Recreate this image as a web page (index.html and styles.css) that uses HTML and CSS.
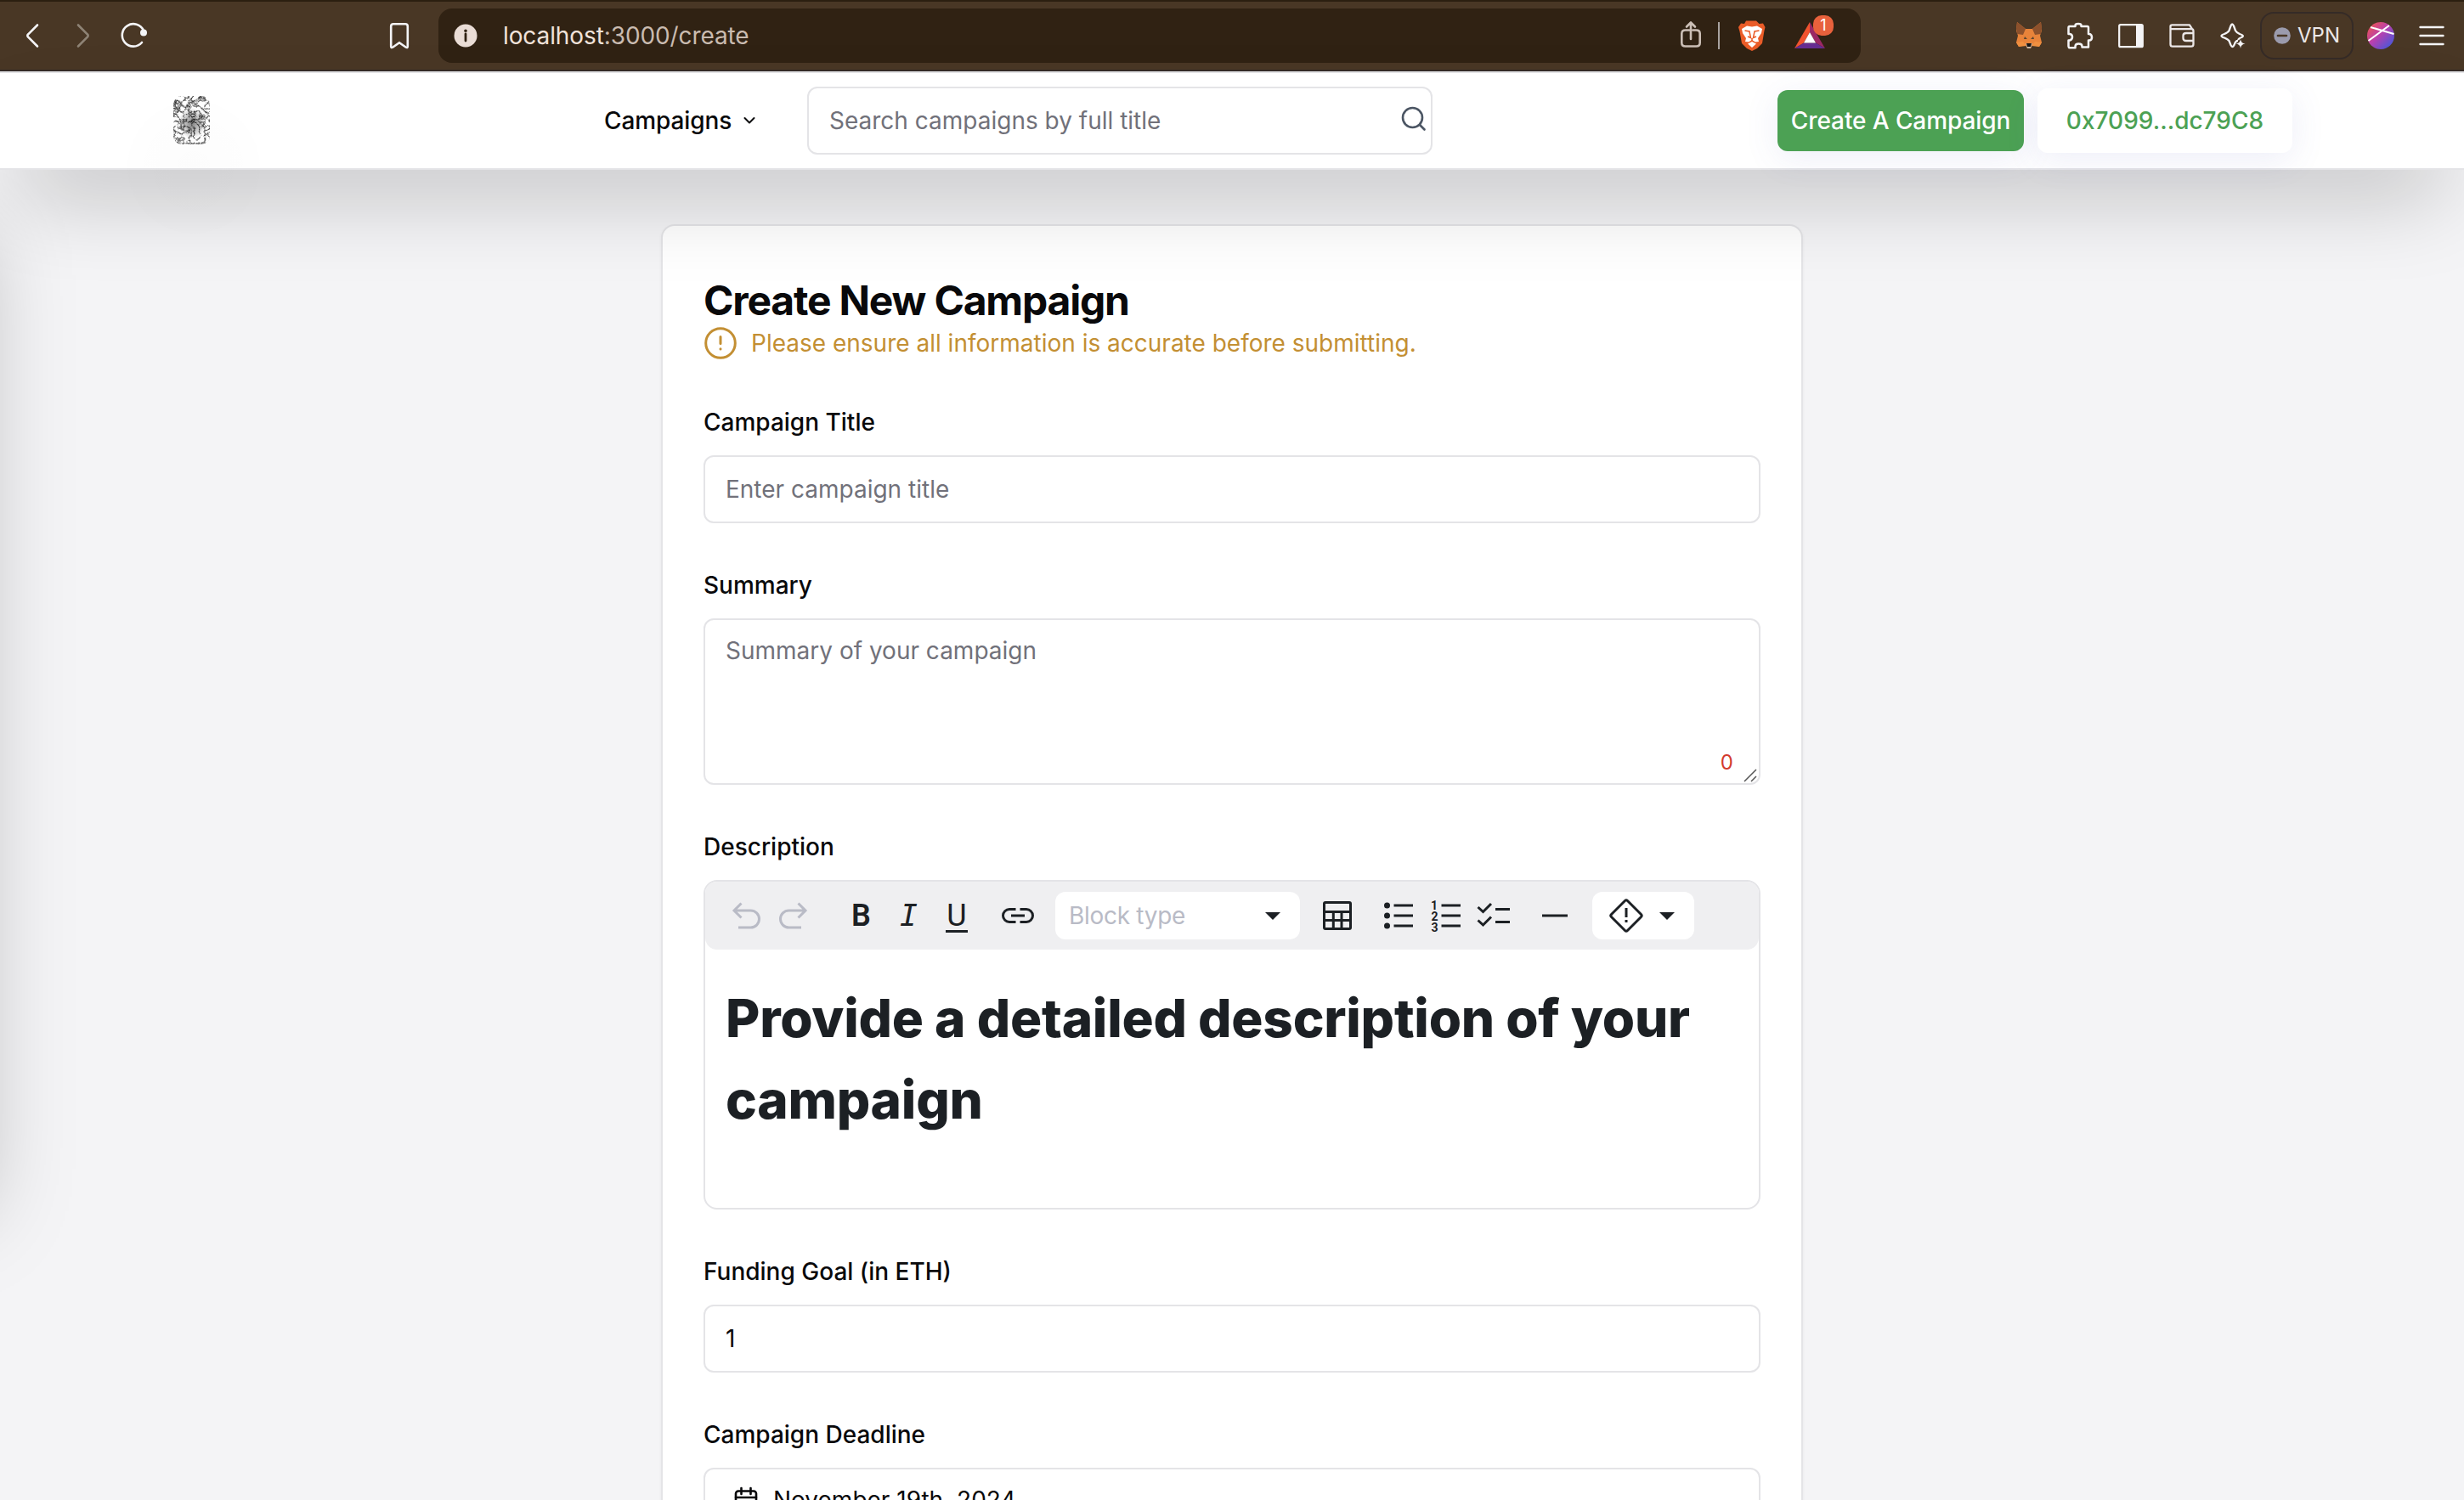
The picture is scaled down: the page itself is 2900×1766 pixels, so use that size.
FILE: index.html
```html
<!DOCTYPE html>
<html lang="en">
<head>
<meta charset="utf-8">
<title>Create New Campaign</title>
<link rel="stylesheet" href="styles.css">
</head>
<body>
<div class="browser">
  <div class="nav-icons">
    <svg width="200" height="80" viewBox="0 0 200 80" fill="none" stroke="#f4f4f6" stroke-width="2.6" stroke-linecap="round" stroke-linejoin="round">
      <path d="M44 27.500L33.200 38.300Q31.400 40 33.200 41.700L44 52.500"/>
      <path d="M92 27.500L102.800 38.300Q104.600 40 102.800 41.700L92 52.500" stroke="#8e8375"/>
      <path d="M167 48A13.200 13.200 0 1 1 169 34"/>
      <circle cx="169" cy="36.500" r="4" fill="#f4f4f6" stroke="none"/>
    </svg>
    <svg class="bookmark" width="24" height="80" viewBox="0 0 24 80" fill="none" stroke="#f4f4f6" stroke-width="2.6" stroke-linejoin="round">
      <path d="M2.200 29Q2.200 26.300 5 26.300H19Q21.800 26.300 21.800 29V52.500Q21.800 55 19.500 53.500L12 48.200L4.500 53.500Q2.200 55 2.200 52.500Z"/>
    </svg>
  </div>
  <div class="url">
    <svg width="28" height="28" viewBox="0 0 28 28"><circle cx="14" cy="14" r="13.500" fill="#eaddd6"/><circle cx="14" cy="8.300" r="1.800" fill="#302213"/><path d="M14 12V20" stroke="#302213" stroke-width="2.800" stroke-linecap="round"/></svg>
    <span class="address">localhost<span class="path">:3000/create</span></span>
    <svg class="url-tools" width="190" height="64" viewBox="0 0 190 64" fill="none">
      <g stroke="#cbbfb6" stroke-width="2.6" stroke-linecap="round" stroke-linejoin="round">
        <path d="M12 25.500H7.500Q3.300 25.500 3.300 29.500V40.500Q3.300 44.500 7.500 44.500H20.500Q24.700 44.500 24.700 40.500V29.500Q24.700 25.500 20.500 25.500H16.500M14 36V17M9 21.500L14 16.500L19 21.500"/>
      </g>
      <path d="M47 16V48" stroke="#a8a3a0" stroke-width="2"/>
      <path d="M79 14.500H91L94.500 18L99 17.500L101.500 22L100.500 26L98 41L92 47L86 50L80 47L74 41L71.500 27L70 22L73 17.500L77 18Z" fill="#ea5c28"/>
      <path d="M80 20.500L86 21.500L92 20.500L98 24L97 29L93 35L94 39L90 39.500L86 37L82 39.500L78 39L79 35L75 29L74 24ZM86 39L91 41.500L86 46L81 41.500Z" fill="#fff"/>
      <path d="M77.500 26L83 27L84.500 34.500L81 33M94.500 26L89 27L87.500 34.500L91 33M86 35V38" stroke="#ea5c28" stroke-width="1.500"/>
      <path d="M154 16L136 47L147 40.500L154 28Z" fill="#f0532e"/>
      <path d="M154 16L172 47L161 40.500L154 28Z" fill="#9b2865"/>
      <path d="M136 47H172L161 40.500H147Z" fill="#662d91"/>
      <path d="M154 28L161 40.500H147Z" fill="#fff"/>
    </svg>
    <span class="badge">1</span>
  </div>
  <div class="extensions">
    <svg width="32" height="32" viewBox="0 0 32 32"><path d="M2 0L12 8H20L30 0L31 10L29 16L31 24L28 29L20 27L18 31H14L12 27L4 29L1 24L3 16L1 10Z" fill="#e8833a"/><path d="M2 0L12 8L9 15L2 14L1 8ZM30 0L20 8L23 15L30 14L31 8Z" fill="#8d512c"/><path d="M1 24L9 23L13 28L4 29ZM31 24L23 23L19 28L28 29Z" fill="#f09040"/><path d="M11 17L14 20L10 20ZM21 17L18 20L22 20Z" fill="#5b4430"/><path d="M12 25L14 31H18L20 25Z" fill="#c9b8a6"/><path d="M13 25H19L18 29H14Z" fill="#151515"/></svg>
    <svg width="32" height="32" viewBox="0 0 32 32" fill="none" stroke="#f4f4f6" stroke-width="2.500" stroke-linejoin="round"><path d="M2.500 6.500Q2.500 5 4 5H10.500V4Q10.500 2 14 2T17.500 4V5H24.500Q26 5 26 6.500V14H27Q30 14.500 30 18T27 21.500H26V29.500H18.500V28.500Q18.500 25.500 14.500 25.500T10.500 28.500V30.300H4Q2.500 30 2.500 28.500V21.500H4Q7 20.500 7 17.500T4 14H2.500Z"/></svg>
    <svg width="32" height="32" viewBox="0 0 32 32" fill="none" stroke="#f4f4f6" stroke-width="2.200"><rect x="2.200" y="3.200" width="27.600" height="26" rx="1.500"/><path d="M22 3H30V29H22Z" fill="#f4f4f6" stroke="none"/></svg>
    <svg width="32" height="32" viewBox="0 0 32 32" fill="none" stroke="#ece8e8" stroke-width="2.300" stroke-linejoin="round"><path d="M4.500 3.300H25L28 8.200H2.500V5Q2.500 3.300 4.500 3.300ZM2.500 8.200V26Q2.500 28.700 5 28.700H27Q29.500 28.700 29.500 26V10.500Q29.500 8.200 27 8.200M29.500 13H21Q17.500 13 17.500 16V19Q17.500 22 21 22H29.500Z"/></svg>
    <svg width="32" height="32" viewBox="0 0 32 32" fill="none" stroke="#f4f4f6" stroke-width="2.300" stroke-linejoin="round"><path d="M22 22Q19 22 17.500 27Q15.500 31 13.500 27L11.500 22Q10.500 20.500 6 18.500Q-1 16 6 14Q10.500 12 11.500 10L13.500 4.500Q15 0.500 17 4.500L19 10Q20 12 24 14Q30.500 16 26 18Q23 19 22 21"/><path d="M25 20Q25.500 25 30.500 25.500Q25.500 26 25 31Q24.500 26 19.500 25.500Q24.500 25 25 20Z" fill="#f4f4f6" stroke="none"/></svg>
  </div>
  <div class="vpn"><svg width="20" height="20" viewBox="0 0 20 20"><circle cx="10" cy="10" r="9.800" fill="#9b9bad"/><path d="M5 10H15" stroke="#493725" stroke-width="2.600" stroke-linecap="round"/></svg><span>VPN</span></div>
  <svg class="profile" width="32" height="32" viewBox="0 0 32 32"><defs><linearGradient id="pg" x1="0" y1="0.100" x2="0.900" y2="1"><stop offset="0" stop-color="#f0554a"/><stop offset=".45" stop-color="#b93fae"/><stop offset="1" stop-color="#3a5be0"/></linearGradient></defs><circle cx="16" cy="16" r="16" fill="url(#pg)"/><path d="M4 6L31.500 14M26 4L1.500 22" stroke="#fff" stroke-width="2"/></svg>
  <svg class="menu" width="30" height="24" viewBox="0 0 30 24" stroke="#f4f4f6" stroke-width="2.400" stroke-linecap="round"><path d="M1.500 2H28.500M1.500 12H28.500M1.500 22H28.500"/></svg>
</div>

<nav class="navbar">
  <div class="logo">
    <svg width="44" height="58" viewBox="0 0 44 58">
      <defs>
        <filter id="etch" x="0" y="0" width="1" height="1" color-interpolation-filters="sRGB">
          <feTurbulence type="turbulence" baseFrequency="0.16" numOctaves="3" seed="8"/>
          <feColorMatrix values="2.500 0 0 0 0.120  2.500 0 0 0 0.120  2.500 0 0 0 0.120  0 0 0 0 1"/>
          <feComposite in2="SourceGraphic" operator="in"/>
        </filter>
        <radialGradient id="core"><stop offset="0" stop-color="#000" stop-opacity=".5"/><stop offset="1" stop-color="#000" stop-opacity="0"/></radialGradient>
      </defs>
      <rect width="43" height="57" rx="10" filter="url(#etch)"/>
      <ellipse cx="22" cy="32" rx="16" ry="18" fill="url(#core)"/>
    </svg>
  </div>
  <div class="campaigns"><span>Campaigns</span><svg width="14" height="10" viewBox="0 0 14 10" fill="none" stroke="#09090b" stroke-width="2" stroke-linecap="round" stroke-linejoin="round"><path d="M1.500 2L7 7.500L12.500 2"/></svg></div>
  <div class="search"><span>Search campaigns by full title</span><svg width="30" height="30" viewBox="0 0 30 30" fill="none" stroke="#4b5563" stroke-width="2.600" stroke-linecap="round"><circle cx="13.500" cy="13.500" r="11.500"/><path d="M22 22L27.500 27.500"/></svg></div>
  <div class="actions">
    <div class="create">Create A Campaign</div>
    <div class="wallet">0x7099...dc79C8</div>
  </div>
</nav>

<main>
  <div class="drawer"></div>
  <section class="card">
    <h1>Create New Campaign</h1>
    <div class="notice"><svg width="40" height="40" viewBox="0 0 40 40" fill="none" stroke="#c38f33" stroke-width="3" stroke-linecap="round"><circle cx="20" cy="20" r="17.300"/><path d="M20 12.500V20.500M20 26.800V27"/></svg><span>Please ensure all information is accurate before submitting.</span></div>
    <div class="form">
      <div class="field"><label>Campaign Title</label><div class="input muted">Enter campaign title</div></div>
      <div class="field"><label>Summary</label><div class="input textarea muted">Summary of your campaign<span class="count">0</span><svg class="grip" width="16" height="16" viewBox="0 0 16 16" stroke="#555" stroke-width="1.500"><path d="M1 15L15 1M9 15L15 9"/></svg></div></div>
      <div class="field"><label>Description</label>
        <div class="editor">
          <div class="toolbar">
            <div class="group history">
              <svg viewBox="0 0 56 56"><path d="M19 42H33.500A9 9 0 0 0 33.500 22H14M22.500 13.500L14 22L22.500 30.500"/></svg>
              <svg viewBox="0 0 56 56"><path d="M37 42H22.500A9 9 0 0 1 22.500 22H42M33.500 13.500L42 22L33.500 30.500"/></svg>
            </div>
            <div class="group">
              <span class="glyph bold">B</span>
              <span class="glyph italic">I</span>
              <span class="glyph under">U</span>
            </div>
            <svg viewBox="0 0 56 56"><path d="M25.500 20.500H18A7.500 7.500 0 0 0 18 35.500H25.500M30.500 20.500H38A7.500 7.500 0 0 1 38 35.500H30.500M20 28H36"/></svg>
            <div class="select">Block type<svg class="caret" viewBox="0 0 18 9"><path d="M0 0H18L9 9Z"/></svg></div>
            <svg viewBox="0 0 56 56"><rect x="12.500" y="12.500" width="31" height="31" rx="1.500"/><path d="M12 23.500H44M12 33.500H44M23.300 23V43M33 23V43"/></svg>
            <div class="group">
              <svg viewBox="0 0 56 56"><path d="M22.500 16H45M22.500 28H45M22.500 40H45"/><g class="solid"><circle cx="14.500" cy="16" r="3.500"/><circle cx="14.500" cy="28" r="3.500"/><circle cx="14.500" cy="40" r="3.500"/></g></svg>
              <svg viewBox="0 0 56 56"><path d="M22.500 16H45M22.500 28H45M22.500 40H45"/><text x="10" y="20.500">1</text><text x="10.500" y="33.500">2</text><text x="10.500" y="47">3</text></svg>
              <svg viewBox="0 0 56 56"><path d="M9.500 18L15.500 23.500L25 14M9.500 33.500L15.500 39L25 29.500M30 20.500H47M30 35.500H47"/></svg>
            </div>
            <svg viewBox="0 0 56 56"><path d="M13 28H43"/></svg>
            <div class="admonition"><svg viewBox="0 0 56 56"><path d="M26.500 10.500Q28 9 29.500 10.500L45.500 26.500Q47 28 45.500 29.500L29.500 45.500Q28 47 26.500 45.500L10.500 29.500Q9 28 10.500 26.500ZM28 19V30M28 33V36"/></svg><svg class="caret" viewBox="0 0 18 9"><path d="M0 0H18L9 9Z"/></svg></div>
          </div>
          <h2>Provide a detailed description of your campaign</h2>
        </div>
      </div>
      <div class="field"><label>Funding Goal (in ETH)</label><div class="input">1</div></div>
      <div class="field"><label>Campaign Deadline</label><div class="input date"><svg width="32" height="32" viewBox="0 0 32 32" fill="none" stroke="#09090b" stroke-width="2.600" stroke-linecap="round" stroke-linejoin="round"><rect x="4" y="5.500" width="24" height="24" rx="3"/><path d="M10.500 2V9M21.500 2V9M4 13H28"/></svg>November 19th, 2024</div></div>
    </div>
  </section>
</main>
</body>
</html>
```
FILE: styles.css
```css
* { box-sizing: border-box; }
body {
  margin: 0;
  width: 2900px;
  height: 1766px;
  overflow: hidden;
  background: #f4f4f6;
  color: #09090b;
  font: 400 28px/40px Inter, "Liberation Sans", sans-serif;
}
svg { display: block; flex: none; }

/* Browser toolbar */
.browser {
  height: 84px;
  display: flex;
  align-items: center;
  background: #493725;
  border-top: 2px solid #2b1f10;
  border-bottom: 2px solid #352b27;
}
.nav-icons { width: 516px; height: 80px; display: flex; flex: none; }
.bookmark { margin-left: 258px; }
.url {
  position: relative;
  width: 1674px;
  height: 64px;
  display: flex;
  align-items: center;
  padding-left: 18px;
  border-radius: 16px;
  background: #302213;
  flex: none;
}
.address { margin-left: 30px; font-size: 28px; letter-spacing: -.1px; color: #f0e2da; white-space: nowrap; }
.path { color: #c9bbb0; }
.url-tools { margin-left: auto; margin-right: 24px; }
.badge {
  position: absolute;
  left: 1618px;
  top: 8px;
  width: 24px;
  height: 24px;
  border-radius: 10px;
  background: #e8613c;
  color: #fff;
  font-size: 18px;
  line-height: 24px;
  text-align: center;
}
.extensions { display: flex; gap: 28px; margin-left: 182px; }
.vpn {
  width: 110px;
  height: 56px;
  display: flex;
  align-items: center;
  gap: 8px;
  margin-left: 16px;
  padding-left: 14px;
  border: 2px solid #352b27;
  border-radius: 16px;
  color: #ece8e8;
  font-size: 24px;
}
.profile { margin-left: 16px; }
.menu { margin-left: 29px; }

/* Site navigation */
.navbar {
  position: relative;
  z-index: 2;
  height: 116px;
  display: flex;
  align-items: center;
  background: #fff;
  border-top: 2px solid #e4e4e7;
  border-bottom: 2px solid #e4e4e7;
  box-shadow: 0 50px 100px -24px rgba(0, 0, 0, .25);
}
.logo { position: relative; width: 44px; margin-left: 204px; }
.logo::after {
  content: "";
  position: absolute;
  left: -54px;
  top: 6px;
  width: 156px;
  height: 156px;
  border-radius: 50%;
  background: radial-gradient(closest-side, rgba(0, 0, 0, .012), rgba(0, 0, 0, .005));
}
.campaigns { width: 702px; display: flex; align-items: center; gap: 14px; padding-left: 463px; font-weight: 500; letter-spacing: -.1px; }
.search {
  width: 736px;
  height: 80px;
  display: flex;
  align-items: center;
  justify-content: space-between;
  padding: 0 5px 0 24px;
  border: 2px solid #e4e4e7;
  border-radius: 12px;
  color: #71717a;
}
.search svg { margin-top: -4px; }
.actions { display: flex; align-items: center; gap: 16px; margin-left: 406px; font-weight: 500; text-align: center; white-space: nowrap; }
.create, .wallet { border-radius: 12px; box-shadow: 0 8px 40px rgba(80, 90, 190, .1); }
.create { width: 290px; height: 72px; line-height: 72px; letter-spacing: -.1px; background: #4ca154; color: #fff; }
.wallet { width: 300px; height: 76px; line-height: 76px; background: #fff; color: #4ca154; }

/* Page */
main { position: relative; height: 1566px; padding-top: 64px; overflow: hidden; }
.drawer {
  position: absolute;
  left: -400px;
  top: 0;
  width: 400px;
  height: 1200px;
  box-shadow: 0 50px 100px -24px rgba(0, 0, 0, .25);
}
.card {
  position: relative;
  width: 1344px;
  height: 1700px;
  margin: 0 auto;
  padding: 64px 48px 0;
  border: 2px solid #e4e4e7;
  border-radius: 16px;
  background: #fff;
  box-shadow: 0 2px 4px rgba(0, 0, 0, .05);
}
h1 { margin: 0; font-size: 48px; line-height: 48px; font-weight: 700; letter-spacing: -1.2px; }
.notice { display: flex; gap: 17px; margin: 6px 0 48px; color: #c38f33; }
.form { display: flex; flex-direction: column; gap: 48px; }
.notice span { margin-left: -1px; }
.field { display: flex; flex-direction: column; gap: 16px; }
label { height: 48px; font-weight: 500; line-height: 50px; }
.input {
  position: relative;
  height: 80px;
  padding: 18px 24px;
  border: 2px solid #e4e4e7;
  border-radius: 12px;
}
.muted { color: #71717a; }
.textarea { height: 196px; padding-top: 16px; }
.count { position: absolute; right: 30px; bottom: 4px; color: #d33b2e; font-size: 24px; }
.grip { position: absolute; right: 2px; bottom: 1px; }
.date { display: flex; align-items: center; gap: 16px; padding: 16px 24px 20px 32px; }

.editor { height: 388px; border: 2px solid #e4e4e7; border-radius: 16px; }
.toolbar {
  height: 80px;
  display: flex;
  align-items: center;
  gap: 16px;
  padding-left: 20px;
  border-radius: 14px;
  background: #efeff1;
}
.toolbar svg { width: 56px; height: 56px; fill: none; stroke: #1c2024; stroke-width: 3; }
.toolbar .group { display: flex; }
.toolbar .history { margin-right: 8px; }
.toolbar .history svg { stroke: #b9bbc6; }
.toolbar .solid { fill: #1c2024; stroke: none; }
.toolbar text { fill: #1c2024; stroke: none; font: 700 14px Roboto, sans-serif; }
.glyph { position: relative; width: 56px; height: 56px; color: #1c2024; text-align: center; font: 500 36px/56px Roboto, sans-serif; }
.bold { width: 55px; margin-right: 1px; font-weight: 600; }
.italic { width: 55px; margin-right: 1px; font: italic 400 35px/56px "DejaVu Sans Mono", monospace; }
.under { font-weight: 400; }
.under::after { content: ""; position: absolute; left: 15px; top: 45px; width: 26px; height: 3px; background: #1c2024; }
.select, .admonition { height: 56px; display: flex; align-items: center; border-radius: 12px; background: #fff; }
.select { width: 288px; justify-content: space-between; padding: 0 23px 0 16px; color: #b9bbc6; letter-spacing: -.3px; }
.toolbar .caret { width: 18px; height: 9px; fill: #1c2024; stroke: none; }
.admonition { width: 120px; gap: 11px; padding-left: 12px; }
h2 {
  margin: 33px 24px 0;
  color: #1c2024;
  font-size: 62px;
  line-height: 96px;
  font-weight: 800;
  letter-spacing: -.25px;
}
```
